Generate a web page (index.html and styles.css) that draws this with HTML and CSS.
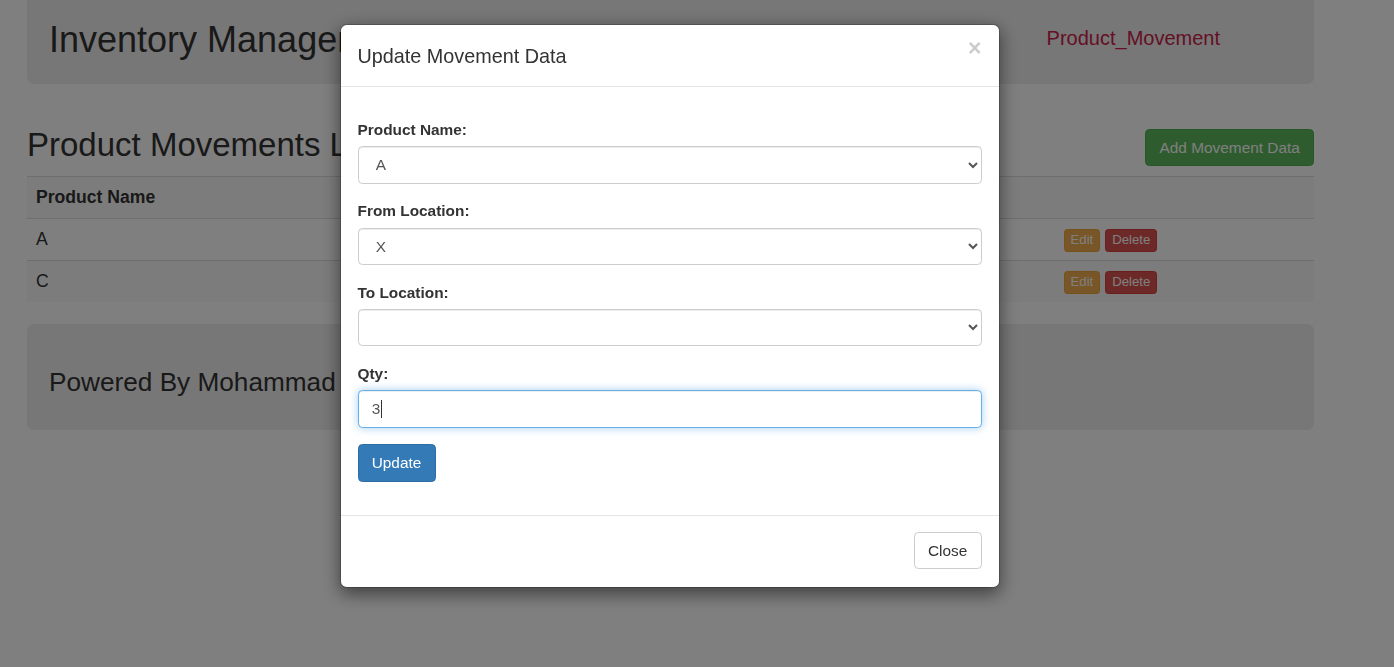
FILE: index.html
```html
<!DOCTYPE html>
<html lang="en">
<head>
<meta charset="utf-8">
<title>Product Movement</title>
<link rel="stylesheet" href="styles.css">
</head>
<body>
<div class="page">
  <header class="jumbo top-bar">
    <h1 class="brand">Inventory Management</h1>
    <nav class="nav">
      <a class="nav-link" href="#">Product_Movement</a>
    </nav>
  </header>

  <div class="section-head">
    <h2 class="section-title">Product Movements List</h2>
    <button class="btn btn-success btn-add">Add Movement Data</button>
  </div>

  <table class="table">
    <colgroup>
      <col class="c1"><col class="c2"><col class="c3"><col class="c4"><col class="c5">
    </colgroup>
    <tbody>
      <tr class="head-row">
        <th>Product Name</th><th>From Location</th><th>To Location</th><th>Qty</th><th></th>
      </tr>
      <tr>
        <td>A</td><td>X</td><td></td><td>3</td>
        <td><div class="actions"><button class="btn btn-xs btn-warning">Edit</button><button class="btn btn-xs btn-danger">Delete</button></div></td>
      </tr>
      <tr>
        <td>C</td><td>X</td><td>Y</td><td>5</td>
        <td><div class="actions"><button class="btn btn-xs btn-warning">Edit</button><button class="btn btn-xs btn-danger">Delete</button></div></td>
      </tr>
    </tbody>
  </table>

  <footer class="jumbo bottom-bar">
    <h3 class="powered">Powered By Mohammad</h3>
  </footer>
</div>

<div class="backdrop"></div>

<div class="modal">
  <div class="modal-header">
    <button class="close" type="button">&times;</button>
    <h4 class="modal-title">Update Movement Data</h4>
  </div>
  <div class="modal-body">
    <form class="form">
      <div class="form-group">
        <label class="label">Product Name:</label>
        <select class="form-control"><option>A</option><option>B</option><option>C</option></select>
      </div>
      <div class="form-group">
        <label class="label">From Location:</label>
        <select class="form-control"><option>X</option><option>Y</option></select>
      </div>
      <div class="form-group">
        <label class="label">To Location:</label>
        <select class="form-control"><option></option><option>X</option><option>Y</option></select>
      </div>
      <div class="form-group">
        <label class="label">Qty:</label>
        <div class="form-control input-focus"><span class="val">3</span><span class="caret"></span></div>
      </div>
      <div class="form-group">
        <button type="button" class="btn btn-primary">Update</button>
      </div>
    </form>
  </div>
  <div class="modal-footer">
    <button type="button" class="btn btn-default">Close</button>
  </div>
</div>
</body>
</html>
```
FILE: styles.css
```css
* { box-sizing: border-box; }

html, body {
  margin: 0;
  padding: 0;
  background: #fff;
}

body {
  font-family: "Liberation Sans", Arial, Helvetica, sans-serif;
  font-size: 15.4px;
  line-height: 22px;
  color: #333;
  height: 667px;
  overflow: hidden;
}

.page {
  width: 1287px;
  margin-left: 27px;
}

.jumbo {
  background: #eee;
  border-radius: 6.6px;
}

.top-bar {
  height: 84px;
  border-radius: 0 0 6.6px 6.6px;
  padding: 19.7px 22px 0 22px;
  display: flex;
  justify-content: space-between;
  align-items: flex-start;
}

.brand {
  margin: 0;
  font-size: 36px;
  line-height: 39.6px;
  font-weight: 500;
  color: #333;
}

.nav {
  margin-top: 4.1px;
  margin-right: 72px;
}

.nav-link {
  font-size: 20px;
  line-height: 28.6px;
  color: #c9214a;
  text-decoration: none;
}

.section-head {
  margin-top: 43.4px;
  display: flex;
  justify-content: space-between;
  align-items: flex-start;
}

.section-title {
  margin: 0;
  font-size: 33px;
  line-height: 1.1;
  font-weight: 500;
}

.btn {
  display: inline-block;
  font-family: inherit;
  font-size: 15.4px;
  line-height: 22px;
  padding: 6.6px 13.2px;
  border: 1px solid transparent;
  border-radius: 4.4px;
  cursor: pointer;
  white-space: nowrap;
}

.btn-add {
  margin-top: 1.6px;
}

.btn-success {
  background: #5cb85c;
  border-color: #4cae4c;
  color: #fff;
}

.btn-primary {
  background: #337ab7;
  border-color: #2e6da4;
  color: #fff;
}

.btn-default {
  background: #fff;
  border-color: #ccc;
  color: #333;
}

.btn-xs {
  font-size: 13.2px;
  line-height: 18.9px;
  padding: 1.1px 6px;
  border-radius: 3.3px;
}

.btn-warning {
  background: #f0ad4e;
  border-color: #eea236;
  color: #fff;
}

.btn-danger {
  background: #d9534f;
  border-color: #d43f3a;
  color: #fff;
}

.table {
  width: 1287px;
  margin-top: 10.1px;
  margin-bottom: 22px;
  border-collapse: collapse;
  table-layout: fixed;
  font-size: 17.6px;
}

.c1 { width: 314px; }
.c2 { width: 220px; }
.c3 { width: 220px; }
.c4 { width: 273.5px; }
.c5 { width: 259.5px; }

.table th,
.table td {
  text-align: left;
  padding: 8px 9px;
  border-top: 1px solid #ddd;
  vertical-align: middle;
  line-height: 25px;
}

.table th { font-weight: bold; }

.table tr:nth-child(odd) {
  background: #f9f9f9;
}

.actions {
  display: flex;
  gap: 5px;
  margin-top: 2px;
}

.bottom-bar {
  height: 106px;
  padding: 43.3px 22px 0 22px;
}

.powered {
  margin: 0;
  font-size: 26.2px;
  line-height: 1.1;
  font-weight: 500;
}

.backdrop {
  position: fixed;
  inset: 0;
  background: rgba(0, 0, 0, 0.5);
}

.modal {
  position: fixed;
  left: 340px;
  top: 24px;
  width: 660px;
  background: #fff;
  border: 1px solid rgba(0, 0, 0, 0.2);
  border-radius: 6.6px;
  box-shadow: 0 5.5px 16.5px rgba(0, 0, 0, 0.5);
  background-clip: padding-box;
}

.modal-header {
  padding: 16.5px 17.5px 16.5px 16.5px;
  border-bottom: 1px solid #e5e5e5;
  display: flex;
  flex-direction: row-reverse;
  justify-content: space-between;
  align-items: flex-start;
}

.modal-title {
  margin: 0;
  font-size: 19.8px;
  line-height: 28.3px;
  font-weight: 500;
  color: #333;
}

.close {
  background: none;
  border: 0;
  padding: 0;
  margin-top: -5px;
  font-family: inherit;
  font-size: 23.1px;
  font-weight: bold;
  line-height: 1;
  color: #000;
  opacity: 0.2;
  cursor: pointer;
}

.modal-body {
  padding: 31.5px 17.5px 16.5px 16.5px;
}

.form { margin: 0; }

.form-group {
  margin-bottom: 16.5px;
}

.label {
  display: block;
  font-weight: bold;
  margin-bottom: 5.5px;
  line-height: 22px;
}

.form-control {
  display: block;
  width: 100%;
  height: 37.4px;
  padding: 6.6px 13.2px;
  font-family: inherit;
  font-size: 15.4px;
  line-height: 22px;
  color: #555;
  background: #fff;
  border: 1px solid #ccc;
  border-radius: 4.4px;
  box-shadow: inset 0 1px 1px rgba(0, 0, 0, 0.075);
}

.input-focus {
  border-color: #66afe9;
  box-shadow: inset 0 1px 1px rgba(0, 0, 0, 0.075), 0 0 8.8px rgba(102, 175, 233, 0.6);
  display: flex;
  align-items: center;
}

.caret {
  display: inline-block;
  width: 1px;
  height: 18px;
  background: #333;
  margin-left: 1px;
}

.modal-footer {
  padding: 16.5px 17.5px 17.5px 16.5px;
  border-top: 1px solid #e5e5e5;
  display: flex;
  justify-content: flex-end;
}
```
